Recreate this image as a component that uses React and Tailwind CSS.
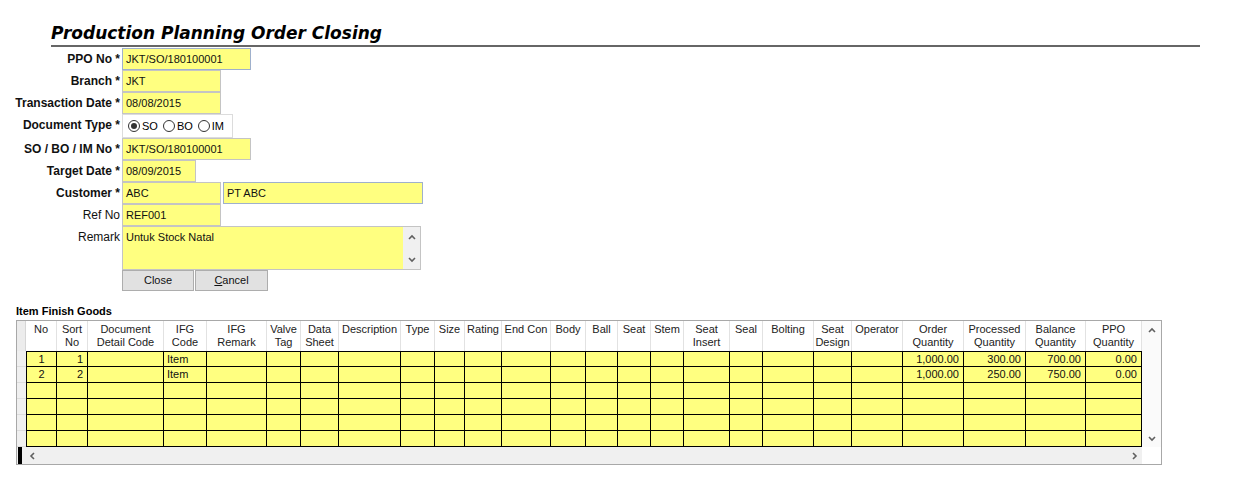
import React from 'react';

const cols = [
  { h: ['No'], w: 'w-[31px]' },
  { h: ['Sort', 'No'], w: 'w-[31px]' },
  { h: ['Document', 'Detail Code'], w: 'w-[76px]' },
  { h: ['IFG', 'Code'], w: 'w-[43px]' },
  { h: ['IFG', 'Remark'], w: 'w-[60px]' },
  { h: ['Valve', 'Tag'], w: 'w-[34px]' },
  { h: ['Data', 'Sheet'], w: 'w-[38px]' },
  { h: ['Description'], w: 'w-[62px]' },
  { h: ['Type'], w: 'w-[34px]' },
  { h: ['Size'], w: 'w-[30px]' },
  { h: ['Rating'], w: 'w-[37px]' },
  { h: ['End Con'], w: 'w-[49px]' },
  { h: ['Body'], w: 'w-[35px]' },
  { h: ['Ball'], w: 'w-[32px]' },
  { h: ['Seat'], w: 'w-[33px]' },
  { h: ['Stem'], w: 'w-[33px]' },
  { h: ['Seat', 'Insert'], w: 'w-[46px]' },
  { h: ['Seal'], w: 'w-[33px]' },
  { h: ['Bolting'], w: 'w-[51px]' },
  { h: ['Seat', 'Design'], w: 'w-[38px]' },
  { h: ['Operator'], w: 'w-[51px]' },
  { h: ['Order', 'Quantity'], w: 'w-[61px]' },
  { h: ['Processed', 'Quantity'], w: 'w-[62px]' },
  { h: ['Balance', 'Quantity'], w: 'w-[60px]' },
  { h: ['PPO', 'Quantity'], w: 'w-[56px]' },
];

// alignment per column for data cells
const align = (i) => {
  if (i === 0) return 'text-center';
  if (i === 3) return 'text-left pl-[3px]';
  if (i === 1 || i >= 21) return 'text-right pr-[4px]';
  return 'text-left';
};

const blank = Array(25).fill('');
const rows = [
  ['1', '1', '', 'Item', ...Array(17).fill(''), '1,000.00', '300.00', '700.00', '0.00'],
  ['2', '2', '', 'Item', ...Array(17).fill(''), '1,000.00', '250.00', '750.00', '0.00'],
  blank,
  blank,
  blank,
  blank,
];

function Chevron({ dir }) {
  const pts = {
    up: '2,7 5,4 8,7',
    down: '2,4 5,7 8,4',
    left: '7,2 4,5 7,8',
    right: '4,2 7,5 4,8',
  }[dir];
  return (
    <svg width="10" height="10" viewBox="0 0 10 10">
      <polyline points={pts} fill="none" stroke="#606060" strokeWidth="1.6" />
    </svg>
  );
}

function Label({ text, bold = true, top = false }) {
  return (
    <div
      className={`w-[120px] shrink-0 text-right text-[12px] ${bold ? 'font-bold' : 'text-[11.5px]'} ${
        top ? 'pt-[3px] leading-[16px]' : 'leading-[22px]'
      } text-[#111]`}
    >
      {text}
    </div>
  );
}

function Field({ w, value, blue = false }) {
  return (
    <div
      className={`${w} h-[22px] border ${
        blue ? 'border-[#9fb0cc]' : 'border-[#c4c4c4]'
      } bg-[#ffff80] pl-[3px] text-[11px] leading-[20px] text-[#111] whitespace-nowrap overflow-hidden`}
    >
      {value}
    </div>
  );
}

function Radio({ checked, label }) {
  return (
    <div className="flex items-center gap-[2px]">
      <div className="w-[12px] h-[12px] rounded-full border border-[#333] bg-white flex items-center justify-center">
        {checked && <div className="w-[6px] h-[6px] rounded-full bg-[#333]" />}
      </div>
      <span className="text-[11px] leading-[14px]">{label}</span>
    </div>
  );
}

export default function App() {
  return (
    <div className="w-[1250px] h-[500px] bg-white text-black font-['Liberation_Sans',Arial,sans-serif] overflow-hidden">
      {/* Title */}
      <div className="pt-[24px] pl-[51px]">
        <div className="w-[1149px] h-[23px] border-b-2 border-[#666]">
          <h1 className="font-['DejaVu_Sans',sans-serif] font-bold italic text-[17px] leading-[19px] text-black">
            Production Planning Order Closing
          </h1>
        </div>
      </div>

      {/* Form */}
      <div className="flex flex-col mt-[1px]">
        <div className="flex h-[22px] gap-[2px]">
          <Label text="PPO No *" />
          <Field w="w-[129px]" value="JKT/SO/180100001" blue />
        </div>
        <div className="flex h-[22px] gap-[2px]">
          <Label text="Branch *" />
          <Field w="w-[99px]" value="JKT" />
        </div>
        <div className="flex h-[22px] gap-[2px]">
          <Label text="Transaction Date *" />
          <Field w="w-[99px]" value="08/08/2015" />
        </div>
        <div className="flex h-[24px] gap-[2px]">
          <Label text="Document Type *" />
          <div className="w-[111px] h-[24px] border border-[#dcdcdc] flex items-center gap-[5px] pl-[5px]">
            <Radio checked label="SO" />
            <Radio label="BO" />
            <Radio label="IM" />
          </div>
        </div>
        <div className="flex h-[22px] gap-[2px]">
          <Label text="SO / BO / IM No *" />
          <Field w="w-[129px]" value="JKT/SO/180100001" />
        </div>
        <div className="flex h-[22px] gap-[2px]">
          <Label text="Target Date *" />
          <Field w="w-[74px]" value="08/09/2015" />
        </div>
        <div className="flex h-[22px] gap-[2px]">
          <Label text="Customer *" />
          <Field w="w-[99px]" value="ABC" />
          <Field w="w-[200px]" value="PT ABC" blue />
        </div>
        <div className="flex h-[22px] gap-[2px]">
          <Label text="Ref No" bold={false} />
          <Field w="w-[99px]" value="REF001" />
        </div>
        <div className="flex h-[44px] gap-[2px]">
          <Label text="Remark" bold={false} top />
          <div className="w-[299px] h-[44px] border border-[#c4c4c4] bg-[#ffff80] flex">
            <div className="flex-1 pl-[3px] pt-[2px] text-[11px] leading-[16px] text-[#111]">
              Untuk Stock Natal
            </div>
            <div className="w-[17px] bg-[#f0f0f0] flex flex-col items-center justify-between py-[5px]">
              <Chevron dir="up" />
              <Chevron dir="down" />
            </div>
          </div>
        </div>
        <div className="flex h-[21px] pl-[122px] gap-[1px]">
          <button className="w-[72px] h-[21px] bg-[#e1e1e1] border border-[#adadad] text-[11px] leading-[19px] text-[#111]">
            Close
          </button>
          <button className="w-[73px] h-[21px] bg-[#e1e1e1] border border-[#adadad] text-[11px] leading-[19px] text-[#111]">
            <span className="underline">C</span>ancel
          </button>
        </div>
      </div>

      {/* Item Finish Goods */}
      <div className="mt-[13px] pl-[16px] h-[16px] text-[11px] font-bold leading-[14px]">Item Finish Goods</div>

      <div className="ml-[16px] w-[1146px] border border-[#a8a8a8] flex flex-col">
        <div className="flex">
          <div className="w-[1125px] flex flex-col">
            {/* header */}
            <div className="flex h-[30px] bg-white">
              <div className="w-[9px] h-[30px] bg-[#ececec] border-r border-[#d6d6d6]" />
              {cols.map((c, i) => (
                <div
                  key={i}
                  className={`${c.w} h-[30px] shrink-0 border-r border-[#e2e2e2] text-center text-[11px] leading-[13px] pt-[2px] whitespace-nowrap overflow-hidden text-[#222]`}
                >
                  {c.h.map((l, j) => (
                    <div key={j}>{l}</div>
                  ))}
                </div>
              ))}
            </div>
            {/* rows */}
            <div className="flex flex-col">
              {rows.map((r, ri) => (
                <div key={ri} className="flex h-[16px]">
                  <div className="w-[9px] h-[16px] bg-[#f0f0f0] border-b border-[#dcdcdc]" />
                  {r.map((v, ci) => (
                    <div
                      key={ci}
                      className={`${cols[ci].w} h-[16px] shrink-0 bg-[#ffff80] border-r border-b border-black ${
                        ri === 0 ? 'border-t' : ''
                      } ${ci === 0 ? 'border-l' : ''} ${align(
                        ci
                      )} text-[11px] leading-[14px] whitespace-nowrap overflow-hidden text-[#111]`}
                    >
                      {v}
                    </div>
                  ))}
                </div>
              ))}
            </div>
          </div>
          {/* vertical scrollbar */}
          <div className="w-[19px] h-[126px] bg-[#fafafa] flex flex-col items-center justify-between py-[4px]">
            <Chevron dir="up" />
            <Chevron dir="down" />
          </div>
        </div>
        {/* horizontal scrollbar */}
        <div className="flex h-[17px]">
          <div className="w-[1125px] h-[17px] bg-[#f0f0f0] flex items-center">
            <div className="w-[4px] h-[17px] bg-black ml-[1px]" />
            <div className="ml-[5px]">
              <Chevron dir="left" />
            </div>
            <div className="ml-auto mr-[3px]">
              <Chevron dir="right" />
            </div>
          </div>
          <div className="w-[19px] h-[17px] bg-white" />
        </div>
      </div>
    </div>
  );
}
